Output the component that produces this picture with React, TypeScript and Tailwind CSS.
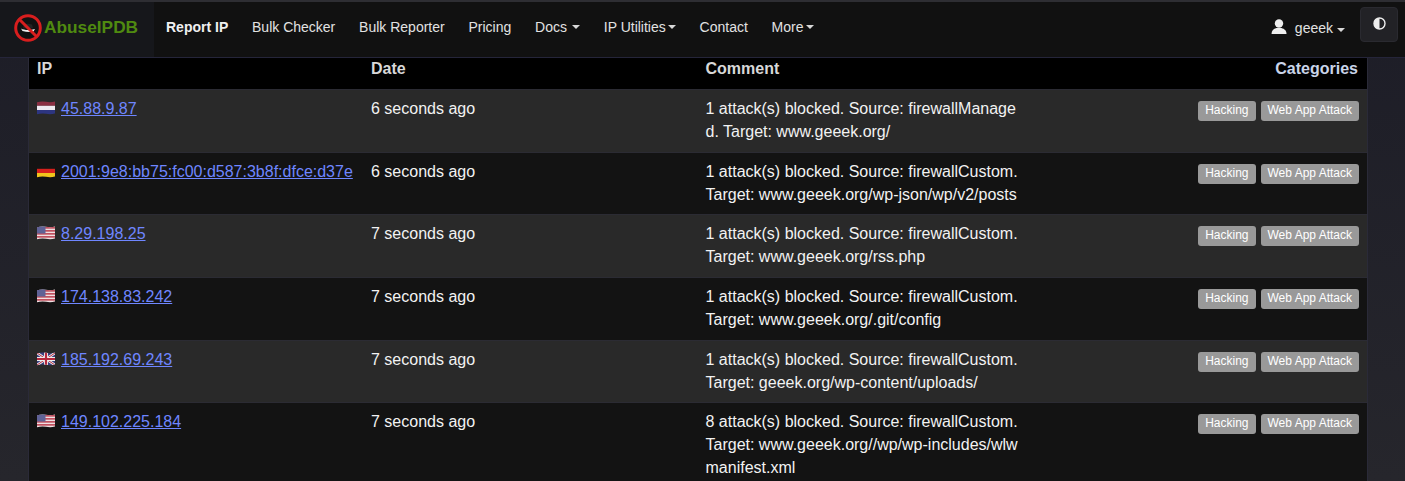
const rows = [
  { flag: "nl", ip: "45.88.9.87", date: "6 seconds ago", c: "1 attack(s) blocked. Source: firewallManaged. Target: www.geeek.org/" },
  { flag: "de", ip: "2001:9e8:bb75:fc00:d587:3b8f:dfce:d37e", date: "6 seconds ago", c: "1 attack(s) blocked. Source: firewallCustom. Target: www.geeek.org/wp-json/wp/v2/posts" },
  { flag: "us", ip: "8.29.198.25", date: "7 seconds ago", c: "1 attack(s) blocked. Source: firewallCustom. Target: www.geeek.org/rss.php" },
  { flag: "us", ip: "174.138.83.242", date: "7 seconds ago", c: "1 attack(s) blocked. Source: firewallCustom. Target: www.geeek.org/.git/config" },
  { flag: "gb", ip: "185.192.69.243", date: "7 seconds ago", c: "1 attack(s) blocked. Source: firewallCustom. Target: geeek.org/wp-content/uploads/" },
  { flag: "us", ip: "149.102.225.184", date: "7 seconds ago", c: "8 attack(s) blocked. Source: firewallCustom. Target: www.geeek.org//wp/wp-includes/wlwmanifest.xml" },
];

function Flag({ k }: { k: string }) {
  return (
    <svg width="18" height="14" viewBox="0 0 18 14" className="shrink-0 block">
      <defs>
        <clipPath id="flag-wave">
          <path d="M0 1.300Q4.500 0 9 .8T18 .6V12.600Q13.500 13.600 9 12.800T0 13.300Z" />
        </clipPath>
      </defs>
      <g clipPath="url(#flag-wave)">
        {k === "nl" && (
          <>
            <rect y="0" width="18" height="4.800" fill="#8b2f42" />
            <rect y="4.800" width="18" height="4.200" fill="#eeeaf0" />
            <rect y="9" width="18" height="5" fill="#2d3580" />
          </>
        )}
        {k === "de" && (
          <>
            <rect y="0" width="18" height="4.800" fill="#141414" />
            <rect y="4.800" width="18" height="4.200" fill="#d6201c" />
            <rect y="9" width="18" height="5" fill="#f0c41c" />
          </>
        )}
        {k === "us" && (
          <>
            <rect y="0" width="18" height="14" fill="#efdfe2" />
            {[1, 4, 7, 10].map((y) => (
              <rect key={y} y={y} width="18" height="1.700" fill="#c0505f" />
            ))}
            <rect y="0" width="8.500" height="7.500" fill="#5f6296" />
          </>
        )}
        {k === "gb" && (
          <>
            <rect y="0" width="18" height="14" fill="#39407f" />
            <path d="M0 1L18 13M18 1L0 13" stroke="#eee" strokeWidth="2.600" />
            <path d="M0 1L18 13M18 1L0 13" stroke="#b5283c" strokeWidth="1" />
            <path d="M9 0V14M0 7H18" stroke="#eee" strokeWidth="4" />
            <path d="M9 0V14M0 7H18" stroke="#b5283c" strokeWidth="2.200" />
          </>
        )}
      </g>
    </svg>
  );
}

function Caret({ className }: { className?: string }) {
  return <span className={`inline-block w-0 h-0 border-x-4 border-x-transparent border-t-4 border-t-[#d8d8d8] align-middle ${className ?? ""}`} />;
}

function Logo() {
  return (
    <svg width="28" height="28" viewBox="0 0 28 28" className="shrink-0">
      <circle cx="14" cy="14" r="12.300" fill="#111" stroke="#d81e1e" strokeWidth="3" />
      <path d="M7 14.500c3 1.800 9 2 14 .5l-1.500 2.400c-3 1-7 .8-11-.4z" fill="#eee" />
      <path d="M10 10.500c2-1 5-1 8 0l1 3.500c-3 .8-7 .8-10 0z" fill="#222" />
      <path d="M5.500 5.500L22.500 22.500" stroke="#d81e1e" strokeWidth="3" />
    </svg>
  );
}

function NavItem({ children, className }: { children: React.ReactNode; className?: string }) {
  return <span className={`flex items-center whitespace-nowrap ${className ?? ""}`}>{children}</span>;
}

function Badge({ children }: { children: React.ReactNode }) {
  return (
    <span className="bg-[#999] text-white text-[12px] leading-none rounded-[3px] px-[7px] pt-[3px] pb-[5px] h-[20px] whitespace-nowrap">
      {children}
    </span>
  );
}

export default function App() {
  return (
    <div className="h-screen overflow-hidden bg-gradient-to-b from-[#1d1d27] to-[#26262c] text-white font-['Liberation_Sans',Arial,sans-serif] text-[16px] leading-[1.42857]">
      <nav className="h-[58px] bg-[#111] border-t-2 border-t-[#2e2e33] border-b border-b-[#25253a] flex items-stretch text-[14px] text-[#e2e2e2]">
        <div className="w-[154px] bg-[#16171b] flex items-center pl-[14px] pb-[4px]">
          <Logo />
          <span className="text-[#4f8a10] font-bold text-[17.3px] ml-[2px]">AbuseIPDB</span>
        </div>
        <div className="flex items-center gap-[23.8px] pl-[12px] pb-[4px] flex-1">
          <NavItem className="font-bold text-[#f0f0f0]">Report IP</NavItem>
          <NavItem>Bulk Checker</NavItem>
          <NavItem>Bulk Reporter</NavItem>
          <NavItem>Pricing</NavItem>
          <NavItem className="gap-[5px]">Docs <Caret /></NavItem>
          <NavItem>IP Utilities<Caret className="ml-[2px]" /></NavItem>
          <NavItem>Contact</NavItem>
          <NavItem>More<Caret className="ml-[2px]" /></NavItem>
        </div>
        <div className="flex items-center pr-[7px]">
          <svg width="16" height="15" viewBox="0 0 16 15" className="mr-[8px] mb-[6px]" fill="#eee">
            <circle cx="8" cy="4.500" r="4.200" />
            <path d="M.5 15c0-3.500 2-5 5-6h5c3 1 5 2.500 5 6z" />
          </svg>
          <span className="mr-[4px] mb-[2px] text-[#e2e2e2]">geeek</span>
          <Caret />
          <div className="ml-[15px] mb-[10px] w-[38px] h-[35px] bg-[#222226] border border-[#2a2a30] rounded-[4px] flex items-center justify-center">
            <svg width="13" height="13" viewBox="0 0 13 13" className="mb-[3px]">
              <circle cx="6.500" cy="6.500" r="5.500" fill="none" stroke="#eee" strokeWidth="1.400" />
              <path d="M6.500 1a5.500 5.500 0 0 0 0 11z" fill="#eee" />
            </svg>
          </div>
        </div>
      </nav>

      <div className="ml-[28px] w-[1340px] border-l border-r border-[#2a2a38]">
        <div className="grid grid-cols-[334px_334.5px_1fr_auto] bg-black font-bold text-[#d8d8d8] h-[32px] px-[8px] border-b border-[#2b2b33] leading-[21px]">
          <span>IP</span>
          <span>Date</span>
          <span>Comment</span>
          <span className="text-right text-[#c9d4e8] pr-[1px]">Categories</span>
        </div>
        {rows.map((r, i) => (
          <div
            key={r.ip}
            className={`grid grid-cols-[334px_334.5px_1fr_auto] px-[8px] py-[8px] border-b border-[#2b2b33] text-[#f2f2f2] ${i % 2 === 0 ? "bg-[#292929]" : "bg-[#131313]"}`}
          >
            <div className="flex items-start gap-[6px]">
              <span className="pt-[3px]"><Flag k={r.flag} /></span>
              <a className="text-[#6f86ff] underline whitespace-nowrap">{r.ip}</a>
            </div>
            <div>{r.date}</div>
            <div className="w-[313px] break-all">{r.c}</div>
            <div className="flex gap-[5px] justify-end pt-[3px]">
              <Badge>Hacking</Badge>
              <Badge>Web App Attack</Badge>
            </div>
          </div>
        ))}
      </div>
    </div>
  );
}
